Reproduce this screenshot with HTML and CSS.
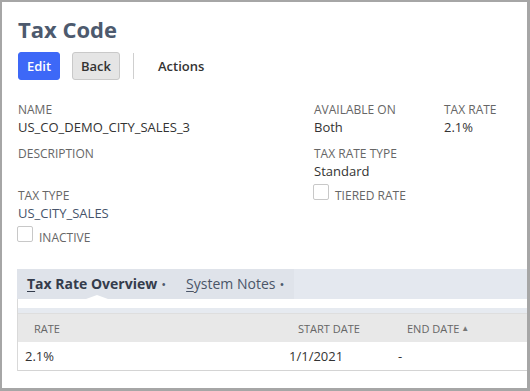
FILE: index.html
```html
<!DOCTYPE html>
<html lang="en">
<head>
<meta charset="utf-8">
<title>Tax Code</title>
<link rel="stylesheet" href="styles.css">
</head>
<body>
<div class="frame">
  <main class="page">
    <h1 class="title">Tax Code</h1>
    <div class="toolbar">
      <button class="btn btn-primary">Edit</button>
      <button class="btn btn-secondary">Back</button>
      <span class="divider"></span>
      <span class="actions">Actions</span>
    </div>

    <div class="fields">
      <div class="col">
        <div class="field">
          <div class="label">Name</div>
          <div class="value">US_CO_DEMO_CITY_SALES_3</div>
        </div>
        <div class="field">
          <div class="label">Description</div>
          <div class="value empty"></div>
        </div>
        <div class="field">
          <div class="label">Tax Type</div>
          <div class="value link">US_CITY_SALES</div>
        </div>
        <div class="check">
          <span class="box"></span>
          <span class="check-label">INACTIVE</span>
        </div>
      </div>
      <div class="col">
        <div class="field">
          <div class="label">Available On</div>
          <div class="value">Both</div>
        </div>
        <div class="field">
          <div class="label">Tax Rate Type</div>
          <div class="value">Standard</div>
        </div>
        <div class="check">
          <span class="box"></span>
          <span class="check-label">TIERED RATE</span>
        </div>
      </div>
      <div class="col">
        <div class="field">
          <div class="label">Tax Rate</div>
          <div class="value">2.1%</div>
        </div>
      </div>
    </div>

    <section class="tabs">
      <div class="tabbar">
        <div class="tab active"><span class="u">T</span>ax Rate Overview<span class="dot">•</span></div>
        <div class="tab"><span class="u">S</span>ystem Notes<span class="dot">•</span></div>
      </div>
      <div class="panel">
        <div class="strip"></div>
        <div class="grid head">
          <div class="hcell">Rate</div>
          <div class="hcell">Start Date</div>
          <div class="hcell">End Date<span class="sort">▲</span></div>
        </div>
        <div class="grid row">
          <div class="cell">2.1%</div>
          <div class="cell">1/1/2021</div>
          <div class="cell">-</div>
        </div>
      </div>
    </section>
  </main>
</div>
</body>
</html>
```

FILE: styles.css
```css
* { box-sizing: border-box; }

html, body {
  margin: 0;
  padding: 0;
  background: #ffffff;
}

.frame {
  width: 530px;
  height: 391px;
  border-style: solid;
  border-color: #a6a6a6;
  border-width: 2px 3px 3px 2px;
  overflow: hidden;
  background: #ffffff;
  font-family: "Open Sans", "Liberation Sans", sans-serif;
  color: #333333;
}

.page {
  padding: 12px 0 0 16px;
}

.title {
  margin: 0;
  font-size: 22px;
  line-height: 30px;
  font-weight: 700;
  color: #4d5a6e;
}

.toolbar {
  margin-top: 8px;
  display: flex;
  align-items: center;
  height: 28px;
}

.btn {
  height: 28px;
  padding: 0;
  font-family: "Open Sans", "Liberation Sans", sans-serif;
  font-size: 13px;
  font-weight: 600;
  border-radius: 3px;
  line-height: 26px;
  text-align: center;
}

.btn-primary {
  width: 42px;
  background: #3d68f7;
  border: 1px solid #3d68f7;
  color: #ffffff;
}

.btn-secondary {
  width: 48px;
  margin-left: 12px;
  background: #e5e5e5;
  border: 1px solid #c9c9c9;
  color: #333333;
}

.divider {
  width: 1px;
  height: 26px;
  margin-left: 13px;
  background: #cfcfcf;
}

.actions {
  margin-left: 24px;
  font-size: 13px;
  font-weight: 600;
  color: #333333;
}

.fields {
  margin-top: 21px;
  display: grid;
  grid-template-columns: 296px 130px 1fr;
}

.field {
  margin-bottom: 8px;
}

.label {
  font-size: 12px;
  line-height: 17px;
  text-transform: uppercase;
  color: #666666;
}

.value {
  font-size: 13px;
  line-height: 19px;
  color: #333333;
}

.value.empty {
  height: 17px;
}

.value.link {
  color: #46546b;
}

.check {
  margin-top: -5px;
  margin-left: -1px;
  display: flex;
  align-items: flex-end;
  height: 16px;
}

.box {
  width: 16px;
  height: 16px;
  border: 1px solid #c8c8c8;
  border-radius: 2px;
  background: #ffffff;
}

.check-label {
  margin-left: 6px;
  margin-bottom: -4px;
  font-size: 12px;
  line-height: 16px;
  color: #666666;
}

.tabs {
  margin-top: 27px;
  margin-left: -1px;
}

.tabbar {
  display: flex;
  height: 30px;
  background: #e4e8ef;
}

.tab {
  position: relative;
  padding: 0 10px;
  line-height: 30px;
  font-size: 14px;
  color: #4a5568;
  background: #dfe3ea;
}

.tab.active {
  font-weight: 700;
  color: #343c4c;
}

.tab.active::after {
  content: "";
  position: absolute;
  left: 50%;
  bottom: 0;
  margin-left: -11px;
  border-left: 11px solid transparent;
  border-right: 11px solid transparent;
  border-bottom: 4px solid #ffffff;
}

.u {
  text-decoration: underline;
  text-underline-offset: 2px;
}

.dot {
  margin-left: 4px;
  font-size: 13px;
  font-weight: 400;
  color: #4d5a6e;
}

.panel {
  border-left: 1px solid #d9d9d9;
  padding-top: 9px;
}

.strip {
  height: 5px;
  background: #e6eaf0;
}

.grid {
  display: grid;
  grid-template-columns: 264px 109px 1fr;
}

.head {
  height: 29px;
  background: #e8e8e8;
  border-top: 1px solid #dedede;
  align-items: center;
}

.hcell {
  padding-left: 16px;
  font-size: 11px;
  text-transform: uppercase;
  color: #666666;
}

.sort {
  margin-left: 2px;
  font-size: 8px;
  vertical-align: 2px;
  color: #777777;
}

.row {
  height: 29px;
  border-bottom: 1px solid #d4d4d4;
  align-items: center;
  background: #ffffff;
}

.cell {
  padding-left: 7px;
  font-size: 13px;
  color: #333333;
}
```
